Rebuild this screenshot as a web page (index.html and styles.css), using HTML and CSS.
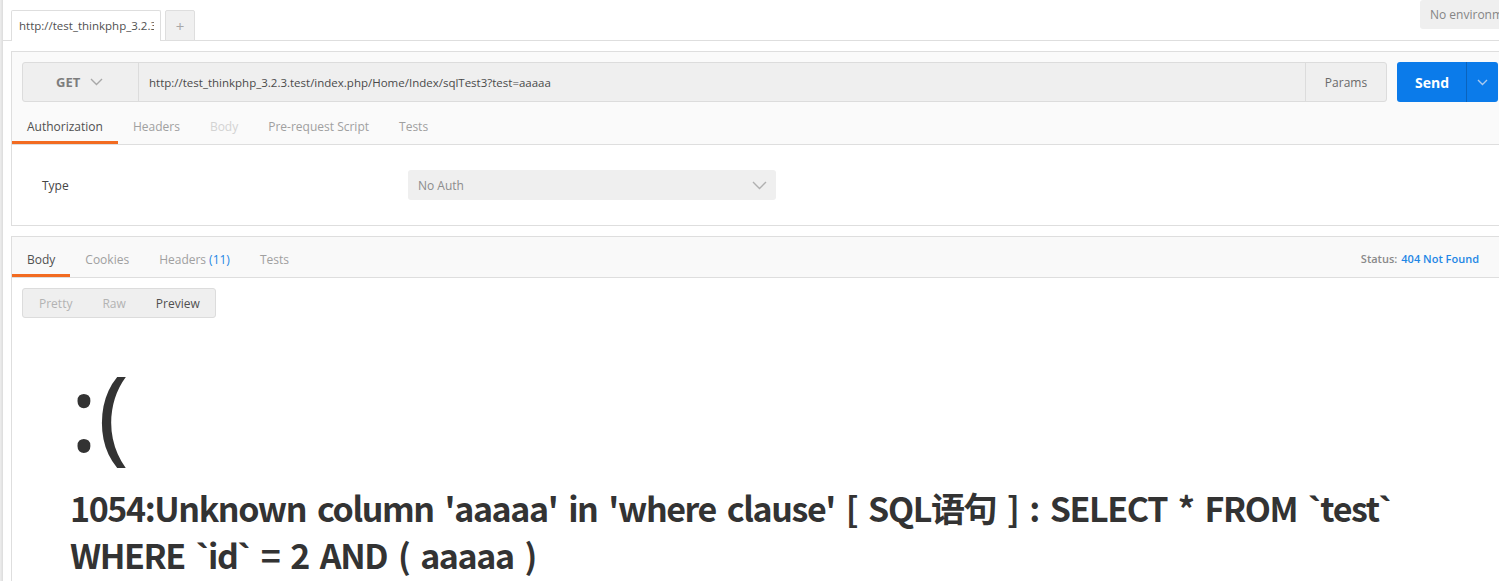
FILE: index.html
```html
<!DOCTYPE html>
<html lang="en">
<head>
<meta charset="utf-8">
<title>Postman</title>
<link rel="stylesheet" href="styles.css">
</head>
<body>
<div class="app">
  <div class="edge"></div>
  <div class="main">
    <header class="topbar">
      <div class="req-tab active"><span class="req-tab-label">http://test_thinkphp_3.2.3</span></div>
      <div class="req-tab add">+</div>
      <div class="env">No environm</div>
    </header>

    <section class="panel request">
      <div class="url-row">
        <div class="url-bar">
          <div class="method">GET
            <svg class="chev" width="13" height="8" viewBox="0 0 13 8"><path d="M1 1l5.5 5.5L12 1" fill="none" stroke="#a8a8a8" stroke-width="1.4"/></svg>
          </div>
          <div class="url">http://test_thinkphp_3.2.3.test/index.php/Home/Index/sqlTest3?test=aaaaa</div>
          <div class="params">Params</div>
        </div>
        <div class="send">
          <span class="send-label">Send</span>
          <span class="send-caret"><svg width="11" height="7" viewBox="0 0 11 7"><path d="M1 1l4.5 4.5L10 1" fill="none" stroke="#a9c9ee" stroke-width="1.4"/></svg></span>
        </div>
      </div>
      <nav class="tabs req-tabs">
        <span class="tab current">Authorization</span>
        <span class="tab">Headers</span>
        <span class="tab disabled">Body</span>
        <span class="tab">Pre-request Script</span>
        <span class="tab">Tests</span>
      </nav>
      <div class="auth">
        <span class="auth-label">Type</span>
        <div class="select">No Auth
          <svg class="chev" width="15" height="9" viewBox="0 0 15 9"><path d="M1 1l6.5 6.5L14 1" fill="none" stroke="#b0b0b0" stroke-width="1.4"/></svg>
        </div>
      </div>
    </section>

    <section class="panel response">
      <nav class="tabs resp-tabs">
        <span class="tab current">Body</span>
        <span class="tab">Cookies</span>
        <span class="tab">Headers <span class="count">(11)</span></span>
        <span class="tab">Tests</span>
        <div class="status">Status: <span class="status-code">404 Not Found</span></div>
      </nav>
      <div class="resp-body">
        <div class="modes">
          <span class="mode">Pretty</span>
          <span class="mode">Raw</span>
          <span class="mode on">Preview</span>
        </div>
        <div class="preview">
          <div class="error">
            <p class="face">:(</p>
            <h1 class="msg">1054:Unknown column 'aaaaa' in 'where clause' [ SQL语句 ] : SELECT * FROM <span class="tick">`</span>test<span class="tick">`</span> WHERE <span class="tick">`</span>id<span class="tick">`</span> = 2 AND ( aaaaa )</h1>
          </div>
        </div>
      </div>
    </section>
  </div>
</div>
</body>
</html>
```

FILE: styles.css
```css
* { box-sizing: border-box; }

body {
  margin: 0;
  font-family: "Open Sans", "Liberation Sans", sans-serif;
  font-size: 12px;
  color: #505050;
  background: #fff;
  overflow: hidden;
}

.app {
  display: flex;
  height: 581px;
}

.edge {
  width: 3px;
  flex: none;
  background: linear-gradient(to right, #eeeeee, #dcdcdc);
}

.main {
  width: 1514px;
  flex: none;
}

/* top bar */
.topbar {
  display: flex;
  height: 41px;
  border-bottom: 1px solid #dedede;
  padding-left: 8px;
}

.req-tab {
  align-self: flex-end;
  height: 31px;
  margin-bottom: -1px;
  border: 1px solid #dedede;
  border-bottom: none;
  border-radius: 2px 2px 0 0;
  display: flex;
  align-items: center;
}

.req-tab.active {
  width: 150px;
  background: #fff;
  padding: 0 6px 1px 7px;
  overflow: hidden;
}

.req-tab-label {
  display: block;
  width: 135px;
  white-space: nowrap;
  overflow: hidden;
  color: #505050;
  font-size: 11.5px;
}

.req-tab.add {
  width: 30px;
  margin-left: 4px;
  justify-content: center;
  background: #f0f0f0;
  color: #a8a8a8;
  font-size: 15px;
  border-bottom: 1px solid #dedede;
}

.env {
  margin-left: auto;
  width: 97px;
  height: 29px;
  background: #efefef;
  border-radius: 3px 0 0 3px;
  padding-left: 10px;
  display: flex;
  align-items: center;
  white-space: nowrap;
  overflow: hidden;
  color: #858585;
  font-size: 12px;
}

/* panels */
.panel {
  margin: 10px 8px 0;
  border: 1px solid #dedede;
  background: #fafafa;
}

.url-row {
  display: flex;
  margin: 10px 10px 0;
  height: 40px;
}

.url-bar {
  flex: 1;
  display: flex;
  background: #efefef;
  border: 1px solid #dcdcdc;
  border-radius: 3px;
}

.method {
  width: 116px;
  border-right: 1px solid #dcdcdc;
  display: flex;
  align-items: center;
  padding-left: 33px;
  font-weight: 700;
  font-size: 13px;
  color: #7d7d7d;
}

.method .chev {
  margin-left: 10px;
}

.url {
  flex: 1;
  display: flex;
  align-items: center;
  padding-left: 10px;
  color: #4a4a4a;
  font-size: 11.5px;
}

.params {
  width: 81px;
  border-left: 1px solid #dcdcdc;
  display: flex;
  align-items: center;
  justify-content: center;
  color: #6a6a6a;
  font-size: 12px;
}

.send {
  margin-left: 10px;
  width: 101px;
  display: flex;
  background: #0b7bea;
  border-radius: 3px;
  color: #fff;
}

.send-label {
  width: 69px;
  display: flex;
  align-items: center;
  justify-content: center;
  font-weight: 700;
  font-size: 14px;
  padding-left: 1px;
}

.send-caret {
  flex: 1;
  border-left: 1px solid #0a63bd;
  display: flex;
  align-items: center;
  justify-content: center;
}

/* tab strips */
.tabs {
  display: flex;
  border-bottom: 1px solid #dedede;
}

.tab {
  display: flex;
  align-items: center;
  padding: 0 15px;
  color: #a0a0a0;
  border-bottom: 3px solid transparent;
  white-space: nowrap;
}

.req-tabs {
  height: 43px;
}

.req-tabs .tab {
  padding-top: 10px;
}

.tab.current {
  color: #505050;
  border-bottom-color: #f26b21;
}

.tab.disabled {
  color: #d3d3d3;
}

.count {
  color: #1f87e5;
  margin-left: 3px;
}

.auth {
  background: #fff;
  height: 80px;
  display: flex;
  align-items: center;
  padding-left: 30px;
}

.auth-label {
  width: 366px;
  color: #454545;
}

.select {
  width: 368px;
  height: 30px;
  background: #efefef;
  border-radius: 3px;
  display: flex;
  align-items: center;
  justify-content: space-between;
  padding: 0 9px 0 10px;
  color: #8c8c8c;
}

/* response */
.resp-tabs {
  height: 41px;
  background: #f9f9f9;
}

.resp-tabs .tab {
  padding-top: 7px;
}

.status {
  margin-left: auto;
  margin-right: 29px;
  display: flex;
  align-items: center;
  gap: 4px;
  font-size: 11px;
  font-weight: 600;
  color: #8a8a8a;
  padding-top: 2px;
}

.status-code {
  color: #1f87e5;
}

.resp-body {
  background: #fff;
  height: 320px;
  padding: 10px 10px 0;
}

.modes {
  display: inline-flex;
  height: 30px;
  background: #efefef;
  border: 1px solid #dcdcdc;
  border-radius: 3px;
  padding-left: 1px;
}

.mode {
  display: flex;
  align-items: center;
  padding: 0 15px;
  color: #b3b3b3;
}

.mode.on {
  color: #505050;
}

.preview {
  font-family: "Noto Sans CJK SC", "Noto Sans", sans-serif;
  color: #333;
}

.error {
  padding: 34px 48px 24px;
}

.face {
  margin: 0 0 13px;
  font-family: "Noto Sans", sans-serif;
  font-size: 104px;
  line-height: 120px;
  font-weight: 400;
}

.msg {
  margin: 0;
  width: 1360px;
  font-size: 34px;
  line-height: 46px;
  font-weight: 700;
  letter-spacing: -1.4px;
  word-spacing: 4.5px;
}

.tick {
  font-family: "Noto Sans", sans-serif;
  letter-spacing: 0;
}
```
